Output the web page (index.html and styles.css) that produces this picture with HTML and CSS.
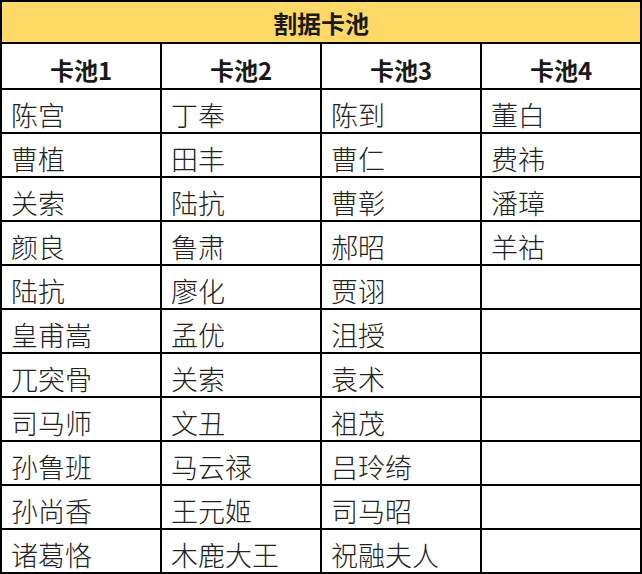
FILE: index.html
```html
<!DOCTYPE html>
<html lang="zh-CN">
<head>
<meta charset="utf-8">
<title>割据卡池</title>
<link rel="stylesheet" href="styles.css">
</head>
<body>
<div class="sheet">
  <div class="cell title">割据卡池</div>
  <div class="cell head">卡池1</div>
  <div class="cell head">卡池2</div>
  <div class="cell head">卡池3</div>
  <div class="cell head">卡池4</div>

  <div class="cell">陈宫</div><div class="cell">丁奉</div><div class="cell">陈到</div><div class="cell">董白</div>
  <div class="cell">曹植</div><div class="cell">田丰</div><div class="cell">曹仁</div><div class="cell">费祎</div>
  <div class="cell">关索</div><div class="cell">陆抗</div><div class="cell">曹彰</div><div class="cell">潘璋</div>
  <div class="cell">颜良</div><div class="cell">鲁肃</div><div class="cell">郝昭</div><div class="cell">羊祜</div>
  <div class="cell">陆抗</div><div class="cell">廖化</div><div class="cell">贾诩</div><div class="cell"></div>
  <div class="cell">皇甫嵩</div><div class="cell">孟优</div><div class="cell">沮授</div><div class="cell"></div>
  <div class="cell">兀突骨</div><div class="cell">关索</div><div class="cell">袁术</div><div class="cell"></div>
  <div class="cell">司马师</div><div class="cell">文丑</div><div class="cell">祖茂</div><div class="cell"></div>
  <div class="cell">孙鲁班</div><div class="cell">马云禄</div><div class="cell">吕玲绮</div><div class="cell"></div>
  <div class="cell">孙尚香</div><div class="cell">王元姬</div><div class="cell">司马昭</div><div class="cell"></div>
  <div class="cell">诸葛恪</div><div class="cell">木鹿大王</div><div class="cell">祝融夫人</div><div class="cell"></div>
</div>
</body>
</html>
```

FILE: styles.css
```css
html, body {
  margin: 0;
  padding: 0;
  background: #ffffff;
}

.sheet {
  width: 642px;
  box-sizing: border-box;
  display: grid;
  grid-template-columns: repeat(4, 158px);
  grid-template-rows: 40px 44px repeat(11, 42px);
  gap: 2px;
  padding: 2px;
  background: #000000;
  font-family: "Noto Sans CJK SC", "Noto Sans", sans-serif;
}

.cell {
  background: #ffffff;
  color: #222222;
  font-size: 27px;
  font-weight: 300;
  line-height: 1;
  display: flex;
  align-items: center;
  padding: 7px 0 0 9px;
  box-sizing: border-box;
  white-space: nowrap;
}

.title {
  grid-column: 1 / -1;
  background: #ffd966;
  justify-content: center;
  font-weight: 700;
  font-size: 24px;
  padding: 2px 0 0 0;
  color: #1a1a1a;
}

.head {
  justify-content: center;
  font-weight: 700;
  font-size: 24px;
  padding: 8px 0 0 0;
  color: #1a1a1a;
}
```
